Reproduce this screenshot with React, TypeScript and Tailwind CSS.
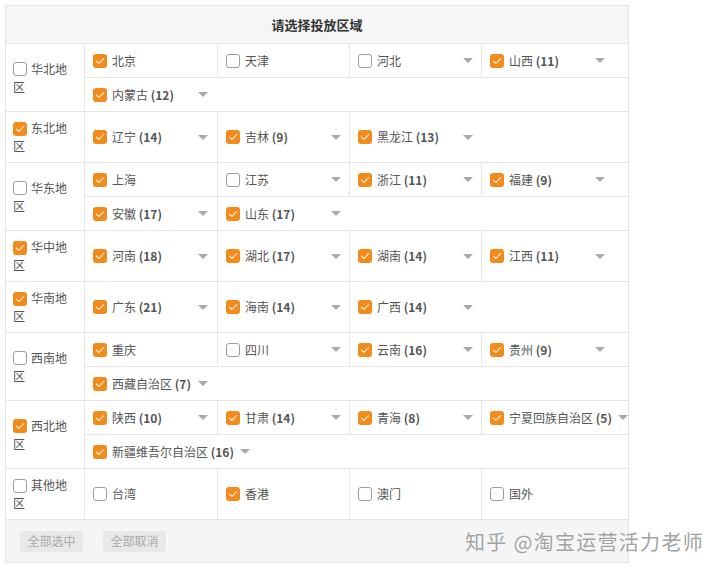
import React from "react";

type Item = { n: string; c: boolean; count?: number; dd?: boolean };
type Region = { name: string; checked: boolean; rows: Item[][] };

const regions: Region[] = [
  {
    name: "华北地区",
    checked: false,
    rows: [
      [
        { n: "北京", c: true },
        { n: "天津", c: false },
        { n: "河北", c: false, dd: true },
        { n: "山西", c: true, count: 11 },
      ],
      [{ n: "内蒙古", c: true, count: 12 }],
    ],
  },
  {
    name: "东北地区",
    checked: true,
    rows: [
      [
        { n: "辽宁", c: true, count: 14 },
        { n: "吉林", c: true, count: 9 },
        { n: "黑龙江", c: true, count: 13 },
      ],
    ],
  },
  {
    name: "华东地区",
    checked: false,
    rows: [
      [
        { n: "上海", c: true },
        { n: "江苏", c: false, dd: true },
        { n: "浙江", c: true, count: 11 },
        { n: "福建", c: true, count: 9 },
      ],
      [
        { n: "安徽", c: true, count: 17 },
        { n: "山东", c: true, count: 17 },
      ],
    ],
  },
  {
    name: "华中地区",
    checked: true,
    rows: [
      [
        { n: "河南", c: true, count: 18 },
        { n: "湖北", c: true, count: 17 },
        { n: "湖南", c: true, count: 14 },
        { n: "江西", c: true, count: 11 },
      ],
    ],
  },
  {
    name: "华南地区",
    checked: true,
    rows: [
      [
        { n: "广东", c: true, count: 21 },
        { n: "海南", c: true, count: 14 },
        { n: "广西", c: true, count: 14 },
      ],
    ],
  },
  {
    name: "西南地区",
    checked: false,
    rows: [
      [
        { n: "重庆", c: true },
        { n: "四川", c: false, dd: true },
        { n: "云南", c: true, count: 16 },
        { n: "贵州", c: true, count: 9 },
      ],
      [{ n: "西藏自治区", c: true, count: 7 }],
    ],
  },
  {
    name: "西北地区",
    checked: true,
    rows: [
      [
        { n: "陕西", c: true, count: 10 },
        { n: "甘肃", c: true, count: 14 },
        { n: "青海", c: true, count: 8 },
        { n: "宁夏回族自治区", c: true, count: 5 },
      ],
      [{ n: "新疆维吾尔自治区", c: true, count: 16 }],
    ],
  },
  {
    name: "其他地区",
    checked: false,
    rows: [
      [
        { n: "台湾", c: false },
        { n: "香港", c: true },
        { n: "澳门", c: false },
        { n: "国外", c: false },
      ],
    ],
  },
];

function Box({ checked, inline }: { checked: boolean; inline?: boolean }) {
  const base = inline
    ? "inline-flex align-middle relative -top-[1px]"
    : "flex";
  if (checked) {
    return (
      <span
        className={`${base} w-[14px] h-[14px] shrink-0 items-center justify-center rounded-[3px] bg-[#f28b1c]`}
      >
        <svg width="10" height="8" viewBox="0 0 10 8">
          <polyline
            points="1.5,4.2 4,6.4 8.6,1.6"
            fill="none"
            stroke="#fde6cc"
            strokeWidth="1.3"
            strokeLinecap="round"
            strokeLinejoin="round"
          />
        </svg>
      </span>
    );
  }
  return (
    <span
      className={`${base} w-[14px] h-[14px] shrink-0 rounded-[3px] border border-[#9d9d9d] bg-white`}
    />
  );
}

function Caret() {
  return (
    <svg width="10" height="5" viewBox="0 0 10 5" className="shrink-0 ml-[6px]">
      <polygon points="0,0 10,0 5,5" fill="#a9a9a9" />
    </svg>
  );
}

function Cell({ item, idx }: { item: Item; idx: number }) {
  const last = idx === 3;
  const cls = [
    "flex items-center pl-[8px]",
    idx > 0 ? "border-l border-[#e6e6e6]" : "",
    last ? "flex-1" : "min-w-[132px]",
  ].join(" ");
  const hasDd = item.dd || item.count !== undefined;
  return (
    <div className={cls}>
      <Box checked={item.c} />
      <span className="ml-[5px] min-w-[80px] text-[12px] text-[#555] whitespace-nowrap">
        {item.n}
        {item.count !== undefined && (
          <span className="font-bold text-[#555]"> ({item.count})</span>
        )}
      </span>
      {hasDd && <Caret />}
    </div>
  );
}

export default function App() {
  return (
    <div
      className="relative w-[720px] h-[571px] bg-white"
      style={{ fontFamily: '"Noto Sans CJK SC", "Noto Sans", sans-serif' }}
    >
      <div className="ml-[5px] pt-[5px] w-[624px]">
        <div className="border border-[#e4e4e4]">
          <div className="h-[38px] flex items-center justify-center bg-[#f6f6f6] border-b border-[#e6e6e6] text-[13px] font-bold text-[#333]">
            请选择投放区域
          </div>
          {regions.map((r) => (
            <div key={r.name} className="flex border-b border-[#e6e6e6]">
              <div className="w-[79px] shrink-0 border-r border-[#e6e6e6] flex items-center pl-[7px] pr-[10px] py-[7px] min-h-[50px]">
                <div className="text-[12px] leading-[18px] text-[#555]">
                  <Box checked={r.checked} inline />
                  <span className="ml-[4px]">{r.name}</span>
                </div>
              </div>
              <div className="flex-1 flex flex-col">
                {r.rows.map((row, ri) => (
                  <div
                    key={ri}
                    className={`flex flex-1 ${
                      ri < r.rows.length - 1
                        ? "min-h-[34px] border-b border-[#e6e6e6]"
                        : "min-h-[33px]"
                    }`}
                  >
                    {row.map((it, i) => (
                      <Cell key={it.n} item={it} idx={i} />
                    ))}
                  </div>
                ))}
              </div>
            </div>
          ))}
          <div className="h-[42px] bg-[#f5f5f5] flex items-center gap-[20px] pl-[14px]">
            <button className="w-[63px] h-[21px] rounded-[2px] bg-[#e8e8e8] text-[12px] text-[#a8a8a8]">
              全部选中
            </button>
            <button className="w-[63px] h-[21px] rounded-[2px] bg-[#e8e8e8] text-[12px] text-[#a8a8a8]">
              全部取消
            </button>
          </div>
        </div>
      </div>
      <div
        className="absolute left-[465px] top-[527px] text-[20px] text-[#a2a2a2] whitespace-nowrap tracking-[1.3px]"
        style={{ textShadow: "0 0 1px #ffffff" }}
      >
        知乎 @淘宝运营活力老师
      </div>
    </div>
  );
}
